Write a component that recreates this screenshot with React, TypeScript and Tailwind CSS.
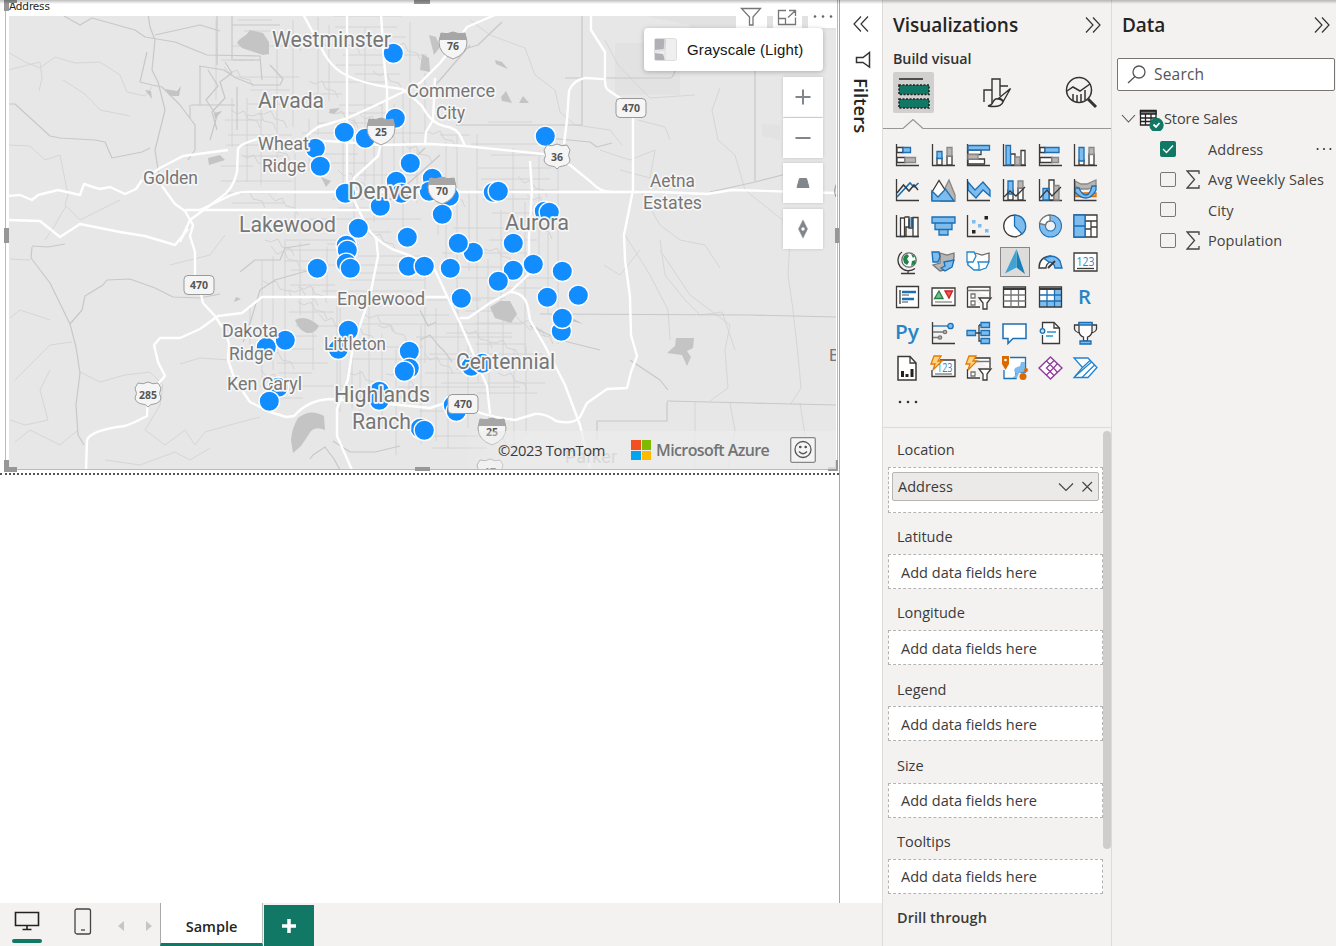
import React from "react";

const UI = "font-['Open_Sans','Noto_Sans',sans-serif]";

/* ---------- Map ---------- */

const highways = [
  "M303 14L325 55Q334 70 348 76Q366 85 402 89Q411 95 422 106Q431 123 444 126Q457 128 461 137L465 146",
  "M347 14V187",
  "M381 14L384 60L387 90V125L380 147L378 156L354 178V200L366 225Q372 238 392 249Q424 260 435 270L447 296L460 323L473 353L487 386L490 414",
  "M376 236L378 256L370 296L353 346L348 379L337 409V436L352 470",
  "M497 14L467 27L453 47L440 63L420 83L403 92L370 108L345 119L318 127Q306 135 300 143L262 138Q240 143 238 149L237 172Q233 190 220 198L190 220L180 242",
  "M435 78L433 120L426 132L425 144",
  "M143 180L160 168L183 156L228 150",
  "M300 140L345 142L381 145L430 144L465 146L543 154L570 165L592 183Q600 192 612 192L660 192L707 194L732 190L836 193",
  "M200 210L225 198Q236 192 246 192H612",
  "M185 210H372",
  "M162 186L175 204L185 211L193 225L190 236L195 252V278",
  "M200 290L203 303L215 316L226 333L229 344L228 360L235 380L250 402L270 412L286 417L294 416Q308 400 330 399L370 402L430 408L442 404L460 405Q482 416 515 420L535 414Q545 413 556 421Q573 425 580 417L587 403L607 389L627 388L631 372L637 356L631 335L630 297L625 260L624 235L633 190V116L620 98L608 90Q605 88 605 80V52L591 30V14",
  "M605 79L585 78Q573 80 569 91L567 120L564 144",
  "M530 161L532 190L529 236V274L510 292L490 303L468 318H460",
  "M511 292Q525 293 528 308L530 320L545 346L565 385L580 425L590 468",
  "M447 297H262L242 313L218 316L200 329L180 338L160 338L154 345L158 362L165 376L148 395L147 416L135 422L125 426Q91 430 87 440L86 470",
  "M8 220L40 221L60 237L80 224L120 232L145 236L175 245L188 229",
  "M8 196L20 195L32 200L38 195L58 190L80 195L84 184L93 187L100 189L110 187L125 194L136 189L142 180",
];

const secondary = [
  "M64 16L80 25L92 18L135 30L145 37L175 42L207 55L260 56L262 80",
  "M148 14L150 27L155 40L152 70L158 82L165 110L155 150L160 182",
  "M155 35L200 25L220 31M147 52L140 82L152 85L162 87L180 105L195 125L195 150L188 160",
  "M8 104L15 104L50 136L60 138L95 140L105 142L112 158L142 152L150 148",
  "M32 246L48 247L65 244M32 247L31 258L50 283L70 324L76 347L80 373L76 405L78 435L84 445",
  "M70 324L82 310L85 296L103 285L107 280L130 279L155 288L173 297L200 298L220 294",
  "M199 66L224 70L236 78L254 85L280 85L283 79L270 65M208 70L218 86L206 100L217 116L210 140",
  "M225 62L232 73L220 82L225 98L212 112L217 130",
  "M310 459L313 455L325 447L334 459L340 470M333 441L350 452H375L400 446",
  "M243 342L251 320L260 290L275 280L310 270",
  "M550 162L570 165L585 178L594 185M548 138L590 142L597 147L612 143",
  "M630 360L660 380L668 390M530 326L560 340L600 350",
  "M710 192L755 182L802 170M667 402V421H597V440M667 401L751 403L836 405M540 314L751 315L836 317",
  "M755 70V181M582 15V125H456M565 78H670Q674 77 675 70",
  "M240 272L255 260L280 260L285 248L310 244",
  "M232 15V60M232 25H280M217 14V65M233 60H260M191 105H235M190 105V118M200 66V105M237 87V130",
  "M383 190L400 172L425 148M390 200L410 182L440 155M470 45L440 80L425 95M502 22L478 45L455 52",
  "M420 340L430 335L438 345L445 352L452 362M420 310L428 326L436 322",
];

const faint = [
  "M8 52L25 62L40 68L55 57L75 63L100 62L120 75L127 92L145 96L152 87M8 70L40 62L42 78L39 91M63 80L85 94L100 110L130 116",
  "M8 145L30 146L45 160L60 155L68 195L65 205L80 220L120 200M66 206L55 225L45 240",
  "M10 259L30 260M50 320L20 310L10 318M72 342L50 345L30 365L15 380M50 370L40 390L48 420L25 425L10 420M78 430L60 445L30 430L15 442M80 372L100 382L125 375L150 372L163 385L160 405L145 430L165 445L185 430L195 445L205 432L230 425L260 417",
  "M105 460L140 465L175 452L190 460L210 448M180 364L200 358L230 360M170 265L210 255L225 235",
  "M470 20L490 35L525 48L535 75L555 90L560 112L575 125L610 130L622 145",
  "M605 40L618 65L650 98L695 95M660 250L690 295L730 325L725 350L728 388L710 401",
  "M625 235L650 275L668 310L670 340M660 240L665 275L685 300L700 315L722 312L735 350M600 150L630 160L655 150L650 178L620 170",
  "M640 190L660 225L680 240L705 245L720 268M800 210L790 240L788 275L793 310L798 355L801 388L790 405M720 88L712 110L718 140L735 155L745 190L795 230",
  "M695 402V470M730 403L735 430L728 468M800 403L805 435L796 470M640 250L620 275L604 265M638 120L665 127L670 140",
];

const terrain = [
  "M615 43H680V95H615Z",
  "M640 15H836V30H760V45H690V25ZM762 124L780 125V140L762 136Z",
];

const lakes = [
  "M239 40L247 34L250 30L263 33L269 42L269 54L263 55L242 48L237 43Z",
  "M165 89L177 91L181 86L179 96L170 96Z",
  "M490 307L500 301L510 301L517 314L511 323L495 318Z",
  "M295 320Q306 314 319 326Q315 334 307 333Q299 331 295 320Z",
  "M298 418Q310 408 324 416L325 430Q316 426 311 431L301 446L293 453L291 440Q292 428 298 418Z",
  "M676 338L694 338L693 348L687 351L691 357L687 366L682 355L667 353L675 346Z",
  "M208 158L220 155L225 160L209 165ZM214 113L222 111L215 119ZM145 90L151 91L152 99ZM144 79L138 92L143 81ZM321 177L331 181L326 187Z",
  "M495 60L502 62L508 69L503 67L496 64ZM501 97L506 91L512 103L502 101ZM523 96L529 103L519 103Z",
  "M330 109L340 108L334 114L329 113ZM429 35L436 37L440 47L434 55ZM422 54L429 58L430 72L420 70Z",
  "M574 319L583 324L572 321ZM236 297L241 299L234 302Z",
];

const localStreets = (() => {
  let seed = 17;
  const random = () => {
    seed = (seed * 16807) % 2147483647;
    return seed / 2147483647;
  };
  const out: string[] = [];
  const regions: [number, number, number, number, number][] = [
    [216, 300, 20, 215, 10], [295, 430, 16, 300, 7], [425, 560, 122, 400, 8], [250, 345, 230, 400, 9], [340, 530, 300, 460, 8],
  ];
  regions.forEach(([x1, x2, y1, y2, step]) => {
    for (let x = x1; x < x2; x += step + random() * 7) {
      const a = y1 + random() * (y2 - y1) * 0.5;
      out.push(`M${x.toFixed(0)} ${a.toFixed(0)}V${(a + 45 + random() * (y2 - a - 45)).toFixed(0)}`);
    }
    for (let y = y1; y < y2; y += step + random() * 7) {
      const a = x1 + random() * (x2 - x1) * 0.5;
      out.push(`M${a.toFixed(0)} ${y.toFixed(0)}H${(a + 30 + random() * (x2 - a - 30)).toFixed(0)}`);
    }
    for (let i = 0; i < 9; i++) {
      const x = x1 + random() * (x2 - x1 - 25);
      const y = y1 + random() * (y2 - y1 - 20);
      out.push(`M${x.toFixed(0)} ${y.toFixed(0)}l6 ${(random() * 8).toFixed(0)}l7 -3l4 8l9 2l3 7`);
    }
  });
  return out.join("");
})();

const stores: [number, number][] = [
  [393, 53], [395, 118], [344, 132], [365, 138], [315, 148], [320, 166], [410, 163], [396, 181], [401, 193],
  [432, 178], [429, 191], [449, 196], [345, 193], [380, 206], [358, 228], [407, 237], [442, 214], [493, 192],
  [498, 191], [545, 136], [544, 211], [549, 212], [473, 252], [458, 243], [513, 243], [513, 270], [533, 264],
  [498, 281], [562, 271], [547, 297], [578, 295], [561, 331], [562, 318], [346, 245], [347, 250], [346, 263],
  [350, 268], [317, 268], [408, 266], [424, 266], [450, 268], [461, 298], [338, 349], [348, 330], [409, 351],
  [409, 368], [404, 371], [266, 347], [285, 340], [278, 387], [269, 401], [379, 391], [379, 400], [453, 405],
  [456, 411], [420, 428], [424, 430], [471, 366], [482, 363],
];

const places: [string, number, number, number, number][] = [
  ["Westminster", 272, 47, 119, 22], ["Arvada", 258, 108, 66, 22], ["Wheat", 258, 150, 51, 18],
  ["Ridge", 262, 172, 44, 18], ["Golden", 143, 184, 55, 18], ["Denver", 348, 199, 72, 23],
  ["Lakewood", 239, 232, 97, 22], ["Commerce", 407, 97, 88, 18], ["City", 436, 119, 29, 18],
  ["Aetna", 650, 187, 45, 18], ["Estates", 643, 209, 59, 18], ["Aurora", 505, 230, 64, 22],
  ["Englewood", 337, 305, 88, 18], ["Dakota", 222, 337, 56, 18], ["Ridge", 229, 360, 44, 18],
  ["Littleton", 324, 350, 62, 18], ["Ken Caryl", 227, 390, 75, 18], ["Centennial", 456, 369, 99, 22],
  ["Highlands", 334, 402, 96, 22], ["Ranch", 352, 429, 59, 22],
];

const Interstate = ({ x, y, n }: { x: number; y: number; n: string }) => (
  <g transform={`translate(${x} ${y})`}>
    <path d="M-12-12Q-6-10 0-13Q6-10 12-12L14-3Q14 9 0 14Q-14 9-14-3Z" fill="#f5f5f5" stroke="#a0a0a0" />
    <path d="M-12-12Q-6-10 0-13Q6-10 12-12L14-5H-14Z" fill="#a6a6a6" />
    <text y="5" textAnchor="middle" className="font-['Noto_Sans'] text-[10.5px] font-bold" fill="#555">{n}</text>
  </g>
);

const UsRoute = ({ x, y, n }: { x: number; y: number; n: string }) => (
  <g transform={`translate(${x} ${y})`}>
    <path d="M-10-11Q-5-9 0-12Q5-9 10-11L13-6Q10 0 13 4Q12 9 6 10Q2 10 0 13Q-2 10-6 10Q-12 9-13 4Q-10 0-13-6Z" fill="#f5f5f5" stroke="#a0a0a0" />
    <text y="4.500" textAnchor="middle" className="font-['Noto_Sans'] text-[10.5px] font-bold" fill="#555">{n}</text>
  </g>
);

const StateRoute = ({ x, y, n }: { x: number; y: number; n: string }) => (
  <g transform={`translate(${x} ${y})`}>
    <rect x="-15" y="-9.5" width="30" height="19" rx="4" fill="#f5f5f5" stroke="#999" />
    <text y="3.5" textAnchor="middle" className="font-['Noto_Sans'] text-[10.5px] font-bold" fill="#555">{n}</text>
  </g>
);

const StoreMap = () => (
  <svg width="827" height="453" viewBox="9 16 827 453" className="block">
    <rect x="9" y="16" width="827" height="453" fill="#e7e7e7" />
    {terrain.map((d) => <path key={d} d={d} fill="#e2e2e2" />)}
    <g fill="none" strokeLinejoin="round">
      <path d={localStreets} stroke="#d1d1d1" strokeWidth="0.9" />
      {faint.map((d) => <path key={d} d={d} stroke="#d6d6d6" strokeWidth="1" />)}
      {secondary.map((d) => <path key={d} d={d} stroke="#c8c8c8" strokeWidth="1.2" />)}
    </g>
    {lakes.map((d) => <path key={d} d={d} fill="#c4c4c4" />)}
    <g fill="none" stroke="#fff" strokeWidth="2.4" strokeLinejoin="round">
      {highways.map((d) => <path key={d} d={d} />)}
    </g>
    {stores.map(([x, y], i) => <circle key={i} cx={x + 0.3} cy={y + 0.3} r="10.2" fill="#118dff" stroke="#fff" strokeWidth="1.4" />)}
    {places.map(([name, x, y, width, size], i) => (
      <text key={i} x={x} y={y} textLength={width} lengthAdjust="spacingAndGlyphs" fontSize={size} fill="#767676" stroke="#f6f6f6" strokeWidth="3.4" strokeLinejoin="round" paintOrder="stroke" className="font-[Roboto]">{name}</text>
    ))}
    <text x="829" y="361" fontSize="17" fill="#767676" className="font-[Roboto]">B</text>
    <Interstate x={453} y={45} n="76" />
    <Interstate x={381} y={131} n="25" />
    <Interstate x={442} y={190} n="70" />
    <Interstate x={492} y={431} n="25" />
    <UsRoute x={557} y={156} n="36" />
    <UsRoute x={148} y={394} n="285" />
    <UsRoute x={490} y={471} n="17" />
    <StateRoute x={631} y={108} n="470" />
    <StateRoute x={199} y={285} n="470" />
    <StateRoute x={463} y={404} n="470" />
    <path d="M837 183Q833 190 836 197" fill="none" stroke="#888" />
    <text x="565" y="463" fontSize="18" textLength="52" fill="#999" className="font-[Roboto]">Parker</text>
  </svg>
);

const ZoomGlyph = ({ children }: { children: React.ReactNode }) => (
  <button className="flex h-10 w-10 items-center justify-center bg-white shadow-[0_0_3px_rgba(0,0,0,0.16)]">
    <svg width="18" height="18" viewBox="0 0 18 18" fill="#80868b" stroke="#80868b" strokeWidth="2">{children}</svg>
  </button>
);

const MapVisual = () => (
  <div className="relative h-[475px] w-[839px]">
    <div className="h-4 pl-[9px] text-[10.5px] leading-[12px] text-[#252423]">
      <span className="font-['DejaVu_Sans',sans-serif] tracking-[-0.15px]">Address</span>
    </div>
    <div className="pl-[9px]"><StoreMap /></div>
    <div className="mt-[4px] border-t-2 border-dotted border-[#555]" />

    <div className="absolute top-0 left-[5px] h-[470px] w-[833px] border-x border-b border-[#bdbbb9]" />
    <svg className="absolute top-0 left-0" width="840" height="472" fill="#979797">
      <path d="M4 0H17V3H9V11H4ZM414 0H430V4H414ZM4 228H9V243H4ZM835 228H839V243H835ZM4 460H9V467H17V472H4ZM415 467H430V471H415ZM838 460H835V467H828V471H838Z" />
    </svg>

    <div className="absolute top-[5px] left-[736px] flex h-[23px] w-[101px] gap-1.5">
      <div className="flex w-[31px] justify-center bg-white">
        <svg width="22" height="22" viewBox="0 0 22 22" fill="none" stroke="#777" strokeWidth="1.3"><path d="M1.500 3.5H20.5L13 12V20H9.500V12Z" /></svg>
      </div>
      <div className="flex w-[30px] justify-center bg-white">
        <svg width="22" height="22" viewBox="0 0 22 22" fill="none" stroke="#777" strokeWidth="1.3"><path d="M10 5.500H2.500V19.500H19.500V12.500M13 5.500H19.500V11M19.500 5.500L12 12.500M2.500 13.500H9.500V19.500" /></svg>
      </div>
      <div className="flex w-[29px] justify-center bg-white">
        <svg width="22" height="22" viewBox="0 0 22 22" fill="#666"><circle cx="3" cy="11.500" r="1.300" /><circle cx="11" cy="11.500" r="1.300" /><circle cx="19" cy="11.500" r="1.300" /></svg>
      </div>
    </div>

    <div className="absolute top-[28px] left-[644px] flex h-[43px] w-[179px] items-center gap-[10px] rounded-[4px] bg-white pl-[10px] shadow-[0_1px_5px_rgba(0,0,0,0.25)]">
      <svg width="23" height="23" viewBox="0 0 23 23">
        <rect x="0.5" y="0.5" width="22" height="22" rx="2" fill="#efefef" stroke="#ddd" />
        <path d="M1 1H12L11 11L1 12ZM1 15L9 16L11 22H1Z" fill="#b0b0b5" /><path d="M1 13.500L10 12.500L11 1V22" stroke="#ddd" fill="none" />
      </svg>
      <span className="pt-px font-['Liberation_Sans',sans-serif] text-[15px] tracking-[0.13px] whitespace-nowrap text-[#161616]">Grayscale (Light)</span>
    </div>

    <div className="absolute top-[77px] left-[783px] flex flex-col">
      <ZoomGlyph><path d="M9 1.500V16.500M1.500 9H16.500" /></ZoomGlyph>
      <div className="h-px" />
      <ZoomGlyph><path d="M1.500 9H16.500" /></ZoomGlyph>
      <div className="h-[5px]" />
      <ZoomGlyph><path d="M5.500 4.500H12.500L15 13.500H3Z" strokeWidth="1" /></ZoomGlyph>
      <div className="h-[6px]" />
      <ZoomGlyph><path d="M9 0L13.500 9L9 18L4.500 9Z" strokeWidth="0.5" /><circle cx="9" cy="9" r="1.700" fill="#fff" stroke="none" /></ZoomGlyph>
    </div>

    <div className="absolute top-[431px] left-[467px] flex h-[38px] w-[369px] items-center bg-gradient-to-r from-[#ebebeb]/20 via-[#ececec]/75 via-15% to-[#ececec]/75 pl-[31px]">
      <span className="w-[133px] text-[14.700px] tracking-[-0.3px] whitespace-nowrap text-[#3a3a3a]">©2023 TomTom</span>
      <div className="grid h-5 w-5 grid-cols-2 gap-px">
        <i className="bg-[#f25022]" /><i className="bg-[#7fba00]" /><i className="bg-[#00a4ef]" /><i className="bg-[#ffb900]" />
      </div>
      <span className="ml-[5px] w-[134px] text-[16px] font-semibold tracking-[-0.6px] whitespace-nowrap text-[#737373]">Microsoft Azure</span>
      <svg width="26" height="26" viewBox="0 0 26 26" fill="none" stroke="#555" strokeWidth="1.3">
        <rect x="0.700" y="0.700" width="24.600" height="24.600" rx="1.500" fill="#f4f4f4" stroke="#888" />
        <circle cx="13" cy="12.500" r="8" /><path d="M9 14.500Q13 19 17 14.500" /><circle cx="10.300" cy="10" r="0.700" fill="#555" /><circle cx="15.700" cy="10" r="0.700" fill="#555" />
      </svg>
    </div>
  </div>
);

/* ---------- Visual gallery icons ---------- */

const K = "#3b3a39";
const B = "#1a6fb5";
const L = "#7fbcee";
const G = "#b8b6b4";
const axis = <path d="M1.500 1V22.500H24" stroke={K} fill="none" />;

const gallery: React.ReactNode[] = [
  <>{axis}<path d="M2 4.500H8V9.500H2ZM2 14.500H10V19.500H2Z" stroke={K} fill="#fff" /><path d="M8 4.500H15.500V9.500H8Z" stroke={B} fill={L} /><path d="M10 14.500H20.500V19.500H10Z" stroke="#8a8886" fill={G} /></>,
  <>{axis}<path d="M6 15H11V22H6ZM16 13H21V22H16Z" stroke={K} fill="#fff" /><path d="M6 8.500H11V15.500H6Z" stroke={B} fill={L} /><path d="M16 4.500H21V13H16Z" stroke="#8a8886" fill={G} /></>,
  <>{axis}<path d="M2 7H15V11.500H2ZM2 16H18.500V21H2Z" stroke={K} fill="#fff" /><path d="M2 11.500H12V16H2Z" stroke="#8a8886" fill={G} /><path d="M2 2.500H23.500V7H2Z" stroke={B} fill={L} /></>,
  <>{axis}<path d="M8.500 11H13V22H8.500ZM19 7.500H23V22H19Z" stroke={K} fill="#fff" /><path d="M13 14H18V22H13Z" stroke="#8a8886" fill={G} /><path d="M4 2.500H8.500V22H4Z" stroke={B} fill={L} /></>,
  <>{axis}<path d="M2 4.500H7V9.500H2ZM2 14.500H14V19.500H2Z" stroke={K} fill="#fff" /><path d="M7 4.500H21V9.500H7Z" stroke={B} fill={L} /><path d="M14 14.500H20.500V19.500H14Z" stroke="#8a8886" fill={G} /></>,
  <>{axis}<path d="M6 17H11V22H6ZM16 11H21V22H16Z" stroke={K} fill="#fff" /><path d="M6 4.500H11V18H6Z" stroke={B} fill={L} /><path d="M16 4.500H21V11.500H16Z" stroke="#8a8886" fill={G} /></>,
  <>{axis}<path d="M2 19L15 5L19 9L23.500 5" stroke={B} fill="none" strokeWidth="1.600" /><path d="M2 15L8.500 7L14 13L19 7L23 12" stroke={K} fill="none" strokeWidth="1.500" /></>,
  <><path d="M12 14L18 2L24 17V23H10Z" fill={G} stroke="#8a8886" /><path d="M1 14L8 2.500L16 15L12 22H1Z" fill="#fff" stroke={K} /><path d="M1 13L7 19L14.500 11L23 23H1Z" fill={L} stroke={B} /></>,
  <><path d="M2 4L9 12L17 4L24 12V18L17 12L10 20L2 12Z" fill={L} stroke={B} />{axis}</>,
  <>{axis}<path d="M6 12H11V22H6ZM16 10H21V22H16Z" stroke={K} fill="#fff" /><path d="M6 3H11V16H6Z" stroke={B} fill={L} /><path d="M16 3H21V10H16Z" stroke="#8a8886" fill={G} /><path d="M2 19L8 13L14 18L23 9" stroke={K} fill="none" /></>,
  <>{axis}<path d="M11 2H16V22H11Z" stroke={K} fill="#fff" /><path d="M5 10.500H11V22H5Z" stroke={B} fill={L} /><path d="M16 7.500H21V22H16Z" stroke="#8a8886" fill={G} /><path d="M2 20L9 12L14 18L23 9" stroke={K} fill="none" /></>,
  <><path d="M2 3L8 6H14L23 2V8L15 11H8L2 8Z" fill={G} stroke="#8a8886" /><path d="M2 15H23V18.500H2Z" fill="#f0a04b" stroke="#d77208" /><path d="M2 10H6Q9 17 13 17Q17 17 19 8H23V12Q19 20 13 20Q7 20 2 14Z" fill={L} stroke={B} /><path d="M1.500 1V22.500H23.500" fill="none" stroke={K} /></>,
  <><path d="M5.500 4H9.500V22.500H5.500ZM9.500 3H14V13H11V22H9.500M18 3.500H23V22.500H18Z" fill="#fff" stroke={K} /><path d="M14 4.500V14H17.500V3" fill="none" stroke={K} /><path d="M16.500 3V14" fill="none" stroke={B} strokeWidth="2" />{axis}</>,
  <><path d="M1 3H24V9H1ZM4 9H21V15.500H4ZM8 15.500H17V21H8Z" fill={L} stroke={B} /></>,
  <>{axis}<path d="M6 6H9.500V9.500H6ZM12 10H15.500V13.500H12ZM19 15H22.500V18.500H19Z" fill={L} /><path d="M18.500 2H22V5.500H18.500ZM6 16H9.500V19.500H6Z" fill="#222" /></>,
  <><circle cx="12.500" cy="12" r="10.800" fill="#fff" stroke={K} /><path d="M12.500 1.200A10.800 10.800 0 0 1 20 20L12.500 12Z" fill={L} stroke={B} /></>,
  <><circle cx="12.500" cy="12" r="8" fill="none" stroke={B} strokeWidth="7" /><circle cx="12.500" cy="12" r="8" fill="none" stroke={L} strokeWidth="5" /><path d="M1.500 9.500A11 11 0 0 1 12 1V7A5 5 0 0 0 7.500 11Z" fill="#fff" stroke="#777" /></>,
  <><path d="M1 1H24V23H1Z" fill="#fff" stroke={K} /><path d="M12 1V23M12 7H24M12 15H18M18 7V23M18 13H24" stroke={K} /><path d="M1 1H12V23H1ZM1 12H12" fill={L} stroke={B} /></>,
  <><circle cx="14" cy="10" r="7.200" fill="#fff" stroke="#666" /><path d="M8 9L9 6L12 4L14 6L12 9L14 12L12 15L9 13ZM16 4L20 6L18 8ZM17 11L20.500 10L20 14L16 16Z" fill="#23834a" /><path d="M7 2A10.300 10.300 0 1 0 20 18.500M13 20.500V23M6 23.500H20" fill="none" stroke={K} /></>,
  <><path d="M9 3L16 5L23 3V8L20 16L14 20L9 21L2 15L9 13Z" fill={G} stroke="#777" /><path d="M1 2H8L9 7L7 12H2ZM13 12L23 10L21 17L14 21L10 18L14 16Z" fill={L} stroke={B} /></>,
  <><path d="M9 3L16 5L23 3V10L20 17L14 20L8 19L2 15V9" fill="#fff" stroke="#666" /><path d="M1 2H8L10 6L7 12H1ZM2 12V15L8 20H13V15L12 12H23L20 18L14 20" fill="#fff" stroke="#2389cf" /></>,
  <><path d="M14.500 -1L23 24L14.500 17.500Z" fill="#1a7eb8" /><path d="M14.500 -1L3 23.500L14.500 17.500Z" fill="#3fa4d3" /></>,
  <><path d="M1 18Q1 7 12.500 6L12 12Q8 14 8 18Z" fill="#fff" stroke={K} /><path d="M6 8.500Q16 3 22 11L24 18H17Q16 12 11 12Z" fill={L} stroke={B} /><path d="M10 18L17 11" stroke={K} strokeWidth="2" /></>,
  <><path d="M1 3H24V21H1Z" fill="#fff" stroke={K} /><path d="M4 18.500H21" stroke={K} /><text x="3.500" y="15.500" textLength="18" lengthAdjust="spacingAndGlyphs" fontSize="12.500" fill="#2d88ca">123</text></>,

  <><path d="M1.500 1.500H23.500V22.500H1.500Z" fill="#fff" stroke={K} /><path d="M5 5V19" stroke={K} /><path d="M7 7H21M7 14H19" stroke={B} strokeWidth="2.500" /><path d="M7 10H14M7 17H13" stroke="#888" /></>,
  <><path d="M1 3H24V20.500H1Z" fill="#fff" stroke={K} /><path d="M3.500 13.500L8 6L12 13.500Z" fill="#77bd8a" stroke="#238044" /><path d="M14 6H21.500L18 13Z" fill="#ef5959" stroke="#c72222" /><path d="M4 17H21" stroke="#888" /></>,
  <><path d="M1.500 2H24V12M1.500 2V22H14" fill="#fff" stroke={K} /><path d="M1.500 5.500H24M5 9H9V13H5ZM5 16H9V20H5Z" stroke="#777" fill="none" /><path d="M13 13H25L21 18V24H17V18Z" fill="#fff" stroke={K} /></>,
  <><path d="M1.500 2H23.500V22H1.500Z" fill="#fff" stroke={K} /><path d="M1.500 4H23.500" stroke={K} strokeWidth="2" /><path d="M1.500 10H23.500M1.500 16H23.500M9 5V22M16.500 5V22" stroke="#777" /></>,
  <><path d="M1.500 2H23.500V22H1.500Z" fill="#fff" /><path d="M16 5H23.500V22H1.500V16H16Z" fill={L} /><path d="M1.500 10H23.500M1.500 16H23.500M9 5V22M16.500 5V22" stroke={B} /><path d="M1.500 2H23.500V22H1.500Z" fill="none" stroke={K} /><path d="M1.500 4H23.500" stroke={K} strokeWidth="2" /></>,
  <text x="5" y="19" fontSize="20" fontWeight="600" textLength="13" lengthAdjust="spacingAndGlyphs" fill="#2685c4">R</text>,

  <text x="0" y="18" fontSize="20" fontWeight="600" textLength="24" lengthAdjust="spacingAndGlyphs" fill="#2685c4">Py</text>,
  <>{axis}<path d="M2 5H17" stroke={B} /><circle cx="19.500" cy="5" r="2.700" fill={L} stroke={B} /><path d="M2 11H12M2 16.500H7" stroke="#777" /><circle cx="14" cy="11" r="1.700" fill={G} stroke="#777" /><circle cx="9" cy="16.500" r="1.700" fill={G} stroke="#777" /></>,
  <><path d="M10 12H15M13 4V20H15M13 4H15" fill="none" stroke={K} /><path d="M1 9.500H9.500V14.500H1ZM15 1.500H23.500V6.500H15ZM15 9.500H23.500V14.500H15ZM15 17.500H23.500V22.500H15Z" fill={L} stroke={B} /></>,
  <path d="M1 3H24V17.500H11L6 22.500V17.500H1Z" fill="#fff" stroke={B} strokeWidth="1.500" />,
  <><path d="M4.500 7V1.500H16L21.500 7V22.500H4.500V14" fill="#fff" stroke={K} /><path d="M16 2V7H21" fill="none" stroke={K} /><circle cx="4.500" cy="10" r="2.300" fill="#c3e1f5" stroke={B} /><path d="M9 11H18M8 15H15" stroke="#2a93d5" strokeWidth="1.500" /></>,
  <><path d="M6 2H19V11Q18 15 14.500 16V20H10.500V16Q7 15 6 11Z" fill="#fff" stroke={K} /><path d="M6 4H1.500V8Q2 11 7 12M19 4H23.500V8Q23 11 18 12" fill="none" stroke={K} /><path d="M6 1.500H19V4H6ZM7 20H18V23H7Z" fill={L} stroke={B} /></>,

  <><path d="M3 0.500H15L21 7V24H3Z" fill="#fff" stroke={K} strokeWidth="1.500" /><path d="M15 0.500V7H21" fill="none" stroke={K} /><path d="M7.500 15V21M12 18V21M17 13V21" stroke="#222" strokeWidth="3" /></>,
  <><path d="M9 4H24V20.500H1V14" fill="#fff" stroke={K} /><text x="6" y="16" textLength="15.500" lengthAdjust="spacingAndGlyphs" fontSize="13" fill="#2d88ca">123</text><path d="M4 18H21" stroke="#777" /><path d="M3 0H10L7 5H11L2 14L4 8H0Z" fill="#ffd384" stroke="#e57b00" /></>,
  <><path d="M9 2H24V12M1.500 13V22H14" fill="#fff" stroke={K} /><path d="M9 5.500H24M5 16H9V20H5Z" stroke="#777" fill="none" /><path d="M13 13H25L21 18V24H17V18Z" fill="#fff" stroke={K} /><path d="M3 0H10L7 5H11L2 14L4 8H0Z" fill="#ffd384" stroke="#e57b00" /></>,
  <><path d="M8 1.500H23.500V16H14V22.500H2V14" fill="#fff" stroke={B} /><path d="M23 6V15L17 17L15 22H10L15 18L12 15L13 12L18 10L19 6Z" fill={L} /><path d="M0 0H7V8L3.500 14L0 8Z" fill="#dc6900" /><circle cx="3.500" cy="4" r="1.300" fill="#fff" /><circle cx="21" cy="20.500" r="3.500" fill="#dc6900" /><circle cx="24" cy="14" r="2" fill="#dc6900" /></>,
  <><path d="M12.500 1L24 12L12.500 23L1 12Z" fill="#fff" stroke="#9339a0" strokeWidth="1.400" /><path d="M8.500 5L15.500 12L8.500 19M12 8.500L16 4.500M19.500 7.500L15.500 12L19.500 16.500M12 15.500L16 19.500M12 8.500L8.500 12L12 15.500" fill="none" stroke="#9339a0" strokeWidth="1.300" /></>,
  <><path d="M1 2H15L24 11.500L15 21.500H1L9.500 11.500Z" fill="#fff" stroke="#1f83d2" strokeWidth="1.300" /><path d="M9.500 11.500L17 4.500M2 20.500L18.500 6M9 21.500L21.500 9" fill="none" stroke="#1f83d2" strokeWidth="1.200" /></>,
];

const DoubleChevron = ({ left = false }: { left?: boolean }) => (
  <svg width="16" height="16" viewBox="0 0 16 16" fill="none" stroke="#333" strokeWidth="1.200" className={left ? "rotate-180" : ""}>
    <path d="M1 0.500L8 8L1 15.500M8 0.500L15 8L8 15.500" />
  </svg>
);

const Ellipsis = ({ size }: { size: number }) => (
  <svg width={size} height="4" viewBox="0 0 20 4" fill="#333"><circle cx="2" cy="2" r="1.300" /><circle cx="10" cy="2" r="1.300" /><circle cx="18" cy="2" r="1.300" /></svg>
);

const FieldWell = ({ name }: { name: string }) => (
  <div>
    <div className="flex h-[41.100px] items-center pt-[7px] pl-[9px] text-[14.500px]">{name}</div>
    <div className="flex h-[35px] items-center border border-dashed border-[#b5b3b1] bg-white pt-[2px] pl-[12px] text-[14.500px] tracking-[0.020px]">Add data fields here</div>
  </div>
);

const VisualizationsPane = () => (
  <section className="flex w-[230px] shrink-0 flex-col border-x border-[#dddbd9] bg-[#f3f2f1] text-[#3b3a39]">
    <div className="flex h-[49px] shrink-0 items-center justify-between pr-[10px] pl-[10px]">
      <h2 className="pt-[2px] text-[19px] font-semibold tracking-[-0.060px] text-[#252423]">Visualizations</h2>
      <DoubleChevron />
    </div>
    <h3 className="h-[23px] pl-[10px] text-[14.300px] leading-[19px] font-semibold tracking-[-0.050px] text-[#323130]">Build visual</h3>
    <div className="flex h-[41px] shrink-0 items-center gap-[43px] pl-[10px]">
      <div className="flex h-[41px] w-[41px] items-center justify-center rounded-[2px] bg-[#d2d0ce]">
        <svg width="32" height="32" viewBox="0 0 32 32"><path d="M1 2H25" stroke="#222" strokeWidth="1.500" /><path d="M1 8H31V17.500H1ZM1 22H31V31H1Z" fill="#117865" stroke="#222" strokeWidth="1.600" strokeDasharray="2 1.500" /></svg>
      </div>
      <svg width="41" height="41" viewBox="0 0 41 41" fill="none" stroke="#333" strokeWidth="1.400">
        <path d="M7 30V18H15V31M15 29V7H23V23M23 14H31M23 14V24" /><path d="M22 26L33.500 16.500L26.500 29Q23 26 22 26ZM21 27Q25 27 26 30Q24 36 11 34Q15 33 16 30Q18 26 21 27Z" fill="#f3f2f1" />
      </svg>
      <svg width="41" height="41" viewBox="0 0 41 41" fill="none" stroke="#333" strokeWidth="1.500">
        <circle cx="18" cy="18" r="12.500" /><path d="M6 19L12 15L19 19L29 12M12 22V29M16 23V30M20 22V30M24 18V28" /><path d="M27 27L35 35" strokeWidth="3" />
      </svg>
    </div>
    <svg className="mt-[6px] shrink-0" width="228" height="10" viewBox="0 0 228 10" fill="none" stroke="#999795" strokeWidth="1.200"><path d="M0 9.500H20L30 0.500L40 9.500H228" /></svg>
    <div className="mt-[8px] grid shrink-0 grid-cols-[repeat(6,35.6px)] auto-rows-[35.6px] pl-[7px]">
      {gallery.map((icon, i) => (
        <div key={i} className={i === 21 ? "my-[2.800px] ml-[2.800px] flex h-[30px] w-[30px] items-center justify-center border border-[#888] bg-[#dedcda]" : "flex items-center justify-center"}>
          <svg width="25" height="24" viewBox="0 0 25 24" fill="none" strokeWidth="1.300" className="overflow-visible">{icon}</svg>
        </div>
      ))}
    </div>
    <div className="flex h-[41px] shrink-0 items-center pb-[10px] pl-[15px]"><Ellipsis size={20} /></div>
    <div className="flex min-h-0 flex-1 overflow-hidden border-t border-[#dddbd9]">
      <div className="w-[220px] shrink-0 pl-[5px]">
        <div className="flex h-[39px] items-end pb-[6px] pl-[9px] text-[14.500px]">Location</div>
        <div className="h-[46px] border border-dashed border-[#b5b3b1] bg-white px-[3px] pt-[4px]">
          <div className="flex h-[29px] items-center rounded-[2px] border border-[#b8b6b4] bg-[#ebeae9] pr-[4px] pl-[5px] text-[14.500px]">
            <span className="flex-1 pt-px">Address</span>
            <svg width="36" height="14" viewBox="0 0 36 14" fill="none" stroke="#444" strokeWidth="1.100"><path d="M1 3.500L8 10.500L15 3.500M24.500 2L34 11.500M34 2L24.500 11.500" /></svg>
          </div>
        </div>
        {["Latitude", "Longitude", "Legend", "Size", "Tooltips"].map((name) => <FieldWell key={name} name={name} />)}
        <div className="mt-[13px] pl-[9px] text-[14.500px] font-semibold tracking-[0.050px]">Drill through</div>
      </div>
      <div className="mt-[3px] h-[418px] w-[8px] rounded-full bg-[#cfcdcb]" />
    </div>
  </section>
);

const fields = [
  { name: "Address", checked: true, sum: false },
  { name: "Avg Weekly Sales", checked: false, sum: true },
  { name: "City", checked: false, sum: false },
  { name: "Population", checked: false, sum: true },
];

const DataPane = () => (
  <section className="flex min-w-0 flex-1 flex-col bg-[#f3f2f1] pl-[5px] text-[#444240]">
    <div className="flex h-[49px] items-center justify-between pr-[6px] pl-[5px]">
      <h2 className="pt-[2px] text-[19px] font-semibold tracking-[-0.1px] text-[#252423]">Data</h2>
      <DoubleChevron />
    </div>
    <div className="mt-[9px] mr-px flex h-[33px] items-center rounded-[2px] border border-[#777573] bg-white pl-[9px] text-[15.500px] text-[#555]">
      <svg width="19" height="19" viewBox="0 0 19 19" fill="none" stroke="#555" strokeWidth="1.300"><circle cx="12" cy="7" r="6" /><path d="M8 11.500L1 18" /></svg>
      <span className="ml-[8px] pt-px tracking-[0.200px]">Search</span>
    </div>
    <div className="mt-[13px] flex h-[30px] items-center pl-[4px] text-[14.500px]">
      <svg width="15" height="10" viewBox="0 0 15 10" fill="none" stroke="#555" strokeWidth="1.100"><path d="M1 1L7.500 8L14 1" /></svg>
      <svg width="26" height="24" viewBox="0 0 26 24" className="ml-[3px]" fill="none" stroke="#222" strokeWidth="1.300">
        <path d="M1.500 3.500H17V18H1.500Z" fill="#fff" /><path d="M1.500 4H17V7H1.500Z" fill="#777" /><path d="M1.500 11H17M1.500 14.500H17M6.500 7V18M12 7V18" />
        <circle cx="17.500" cy="18" r="7.200" fill="#117865" stroke="none" /><path d="M14.500 17.500L17 20L20.500 16" stroke="#fff" strokeWidth="1.800" />
      </svg>
      <span className="-ml-[1px] tracking-[-0.080px]">Store Sales</span>
    </div>
    {fields.map((f) => (
      <div key={f.name} className="flex h-[30.400px] items-center pl-[43px] text-[14.500px]">
        {f.checked ? (
          <svg width="16" height="16" viewBox="0 0 16 16" fill="none"><rect width="16" height="16" rx="2" fill="#117865" /><path d="M3 8L6.500 11.500L13 4.500" stroke="#fff" strokeWidth="1.300" /></svg>
        ) : (
          <span className="h-[15px] w-4 rounded-[2px] border border-[#777]" />
        )}
        <span className="flex w-[32px] shrink-0 justify-center pl-[2px]">
          {f.sum && <svg width="14" height="19" viewBox="0 0 14 19" fill="none" stroke="#444" strokeWidth="1.300"><path d="M13 4V1H1L8.500 9.500L1 18H13V15" /></svg>}
        </span>
        <span className="flex-1 pt-px tracking-[0.080px] whitespace-nowrap">{f.name}</span>
        {f.checked && <span className="mr-[4px]"><Ellipsis size={16} /></span>}
      </div>
    ))}
  </section>
);

const FiltersPane = () => (
  <aside className="flex w-[42px] flex-col items-center bg-white pt-[16px] pr-[1px] text-[#252423]">
    <DoubleChevron left />
    <svg className="mt-[19px] ml-[4px]" width="16" height="18" viewBox="0 0 16 18" fill="none" stroke="#333" strokeWidth="1.500"><path d="M14.500 1.500V16L8 11.500H1.500V6.500H8Z" /></svg>
    <span className="mt-[9px] text-[18.500px] leading-[20px] font-semibold [writing-mode:vertical-rl]">Filters</span>
  </aside>
);

const PageBar = () => (
  <footer className="flex h-[43px] bg-[#f3f2f1]">
    <div className="flex w-[53px] flex-col items-center pt-[8px]">
      <svg width="26" height="20" viewBox="0 0 26 20" fill="none" stroke="#222" strokeWidth="1.600"><path d="M1.500 1.500H24.500V14.500H1.500ZM13 15V18M8.500 18.500H17.500" /></svg>
      <div className="mt-[8px] h-[4px] w-[30px] rounded-full bg-[#117865]" />
    </div>
    <svg className="mt-[5px] ml-[21px]" width="18" height="28" viewBox="0 0 18 28" fill="none" stroke="#444" strokeWidth="1.300"><rect x="1" y="1" width="15.500" height="25" rx="2" /><path d="M7 22H11" /></svg>
    <svg className="mt-[16px] ml-[25px]" width="36" height="14" viewBox="0 0 36 14" fill="#c8c6c4"><path d="M7 2V12L1 7ZM29 2V12L35 7Z" /></svg>
    <div className="ml-[7px] flex w-[103px] items-center justify-center border-r border-b-[3px] border-l border-r-[#bbb] border-b-[#117865] border-l-[#aaa] bg-white pt-[7px] text-[14.500px] font-semibold text-[#252423]">Sample</div>
    <button className="mt-[2px] ml-px flex w-[50px] items-center justify-center bg-[#117865]">
      <svg width="16" height="16" viewBox="0 0 16 16" stroke="#fff" strokeWidth="3.500"><path d="M8 1V15M1 8H15" /></svg>
    </button>
  </footer>
);

export default function App() {
  return (
    <main className={`relative flex h-[946px] w-[1336px] overflow-hidden bg-white ${UI}`}>
      <div className="flex w-[882px] shrink-0 flex-col">
        <div className="flex h-[903px]">
          <div className="w-[840px] border-r border-[#a9a7a5] bg-white"><MapVisual /></div>
          <FiltersPane />
        </div>
        <PageBar />
      </div>
      <VisualizationsPane />
      <DataPane />
      <div className="pointer-events-none absolute inset-x-0 top-0 h-[4px] bg-gradient-to-b from-black/25 to-transparent" />
    </main>
  );
}
